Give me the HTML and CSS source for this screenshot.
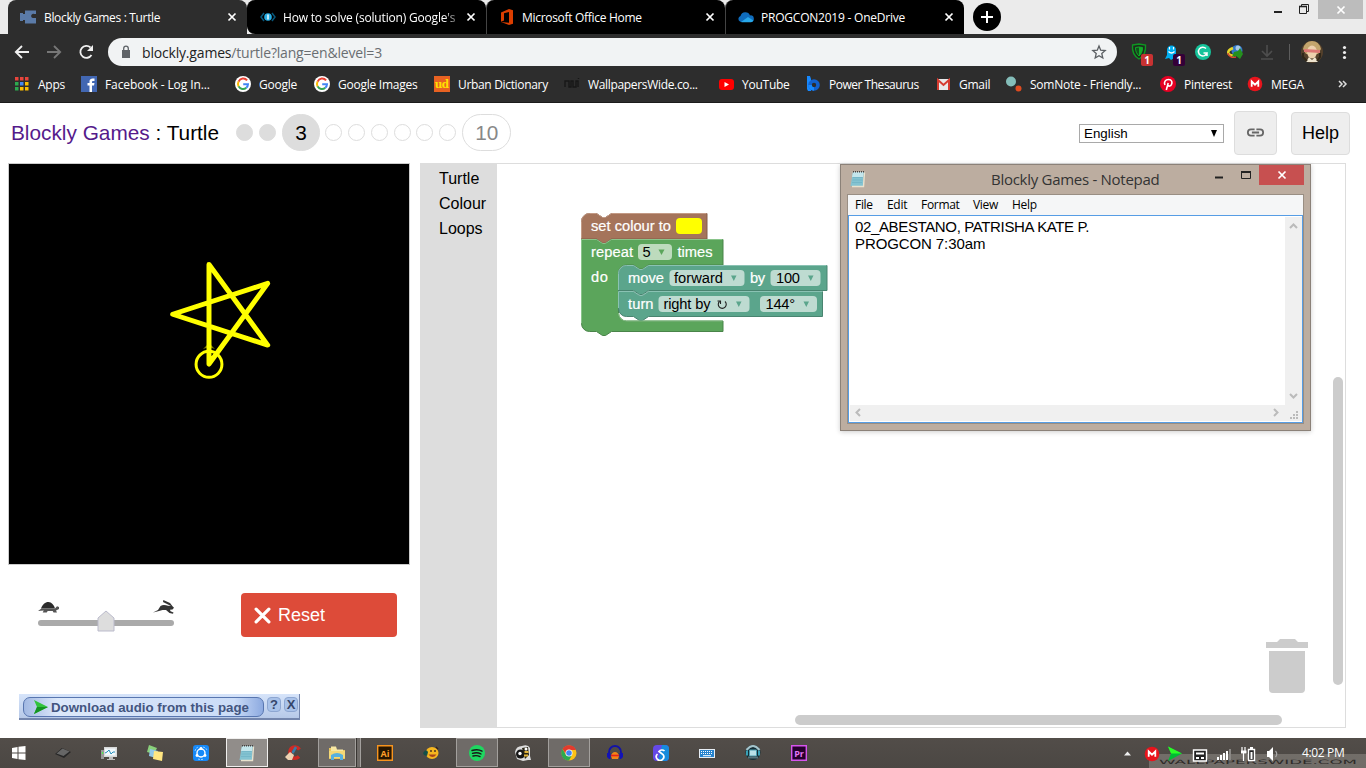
FILE: index.html
```html
<!DOCTYPE html>
<html lang="en">
<head>
<meta charset="utf-8">
<title>Blockly Games : Turtle</title>
<link rel="stylesheet" href="styles.css">
</head>
<body>
<svg class="defs" aria-hidden="true">
  <symbol id="g" viewBox="0 0 16 16"><circle cx="8" cy="8" r="8" fill="#fff"/><path d="M12.1 4.4A5 5 0 0 0 3.6 5.6" fill="none" stroke="#ea4335" stroke-width="2"/><path d="M3.6 5.6a5 5 0 0 0 0 4.8" fill="none" stroke="#fbbc05" stroke-width="2"/><path d="M3.6 10.4a5 5 0 0 0 7.7 1.4" fill="none" stroke="#34a853" stroke-width="2"/><path d="M11.3 11.8A5 5 0 0 0 13 8.2H8.2" fill="none" stroke="#4285f4" stroke-width="2"/></symbol>
  <symbol id="x" viewBox="0 0 10 10"><path d="M1.5 1.5l7 7m0-7l-7 7" fill="none" stroke="currentColor" stroke-width="1.7"/></symbol>
  <symbol id="mega" viewBox="0 0 16 16"><circle cx="8" cy="8" r="7.3" fill="#e8141c"/><path d="M4.7 10.8V5.5L8 8.7l3.3-3.2v5.3" fill="none" stroke="#fff" stroke-width="1.8"/></symbol>
  <symbol id="note" viewBox="0 0 16 18"><path d="M3 2h11l-1 14H.5z" fill="#84c3d1"/><path d="M3 2h10.500l-.5 5H2z" fill="#c4e6ec"/><path d="M14.500 2.500l-1 14H2" fill="none" stroke="#e9e2ce" stroke-width="1.400"/><path d="M3 7.500h9.500M2.500 10h10M2 12.500h10" stroke="#6fb2c4" stroke-width=".7"/><path d="M3 1.800h11" stroke="#444" stroke-width="1.500" stroke-dasharray="1 1"/></symbol>
</svg>

<header class="browser">
  <div class="tabs">
    <div class="tab active"><svg class="fav" viewBox="0 0 16 16"><path d="M5 1.500h11V5h-2c-3-1-4 4-1 4h3v5.500H5V11H3v1H0V4h3v1h2z" fill="#5b7ba8"/></svg><span class="t1">Blockly Games : Turtle</span><svg class="close"><use href="#x"/></svg></div>
    <div class="tab"><svg class="fav" viewBox="0 0 16 16"><path d="M4 4L1 8l3 4m8-8l3 4-3 4" fill="none" stroke="#07577b" stroke-width="1.5"/><circle cx="8" cy="8" r="3.800" fill="#27aee5"/><path d="M8 5.500v5" stroke="#fff" stroke-width="1.400"/></svg><span class="t2">How to solve (solution) Google's</span><svg class="close"><use href="#x"/></svg></div>
    <div class="tab"><svg class="fav" viewBox="0 0 16 16"><path d="M2 3.500L10 0l4 1.200v13.600L10 16l-8-3 8 .8V3L5 4.200v7.300l-3 1.300z" fill="#dc3e00"/></svg><span class="t3">Microsoft Office Home</span><svg class="close"><use href="#x"/></svg></div>
    <div class="tab"><svg class="fav" viewBox="0 0 16 16"><path d="M2 12.500A3 3 0 0 1 2.500 7 5 5 0 0 1 12 6.400 3.300 3.300 0 0 1 13 13H3z" fill="#0f6cbd"/><path d="M3 13l7-5 5.300 3.600A2.500 2.500 0 0 1 13 13.200H4z" fill="#28a8ea"/></svg><span class="t4">PROGCON2019 - OneDrive</span><svg class="close"><use href="#x"/></svg></div>
    <svg class="newtab" viewBox="0 0 28 28"><circle cx="14" cy="14" r="14"/><path d="M14 8v12M8 14h12" stroke="#fff" stroke-width="2"/></svg>
    <div class="winctl"><svg class="minmax" viewBox="0 0 60 19"><path d="M16 12h8" stroke="#222" stroke-width="2"/><path d="M41.500 6.500h7v7h-7zM43.500 6.500v-2h7v7h-2" fill="none" stroke="#222"/><path d="M41 6.500h8" stroke="#222" stroke-width="1.600"/></svg><div class="winclose"><svg viewBox="0 0 10 10"><use href="#x"/></svg></div></div>
  </div>
  <div class="toolbar">
    <svg class="nav" viewBox="0 0 95 28"><g fill="none" stroke="#f0f0f0" stroke-width="1.8"><path d="M22 14H9m6-6l-6.200 6 6.200 6"/><path d="M40 14h13m-6-6l6.200 6-6.200 6" stroke="#777"/><path d="M84.500 17a6 6 0 1 1-1-7.500"/></g><path d="M86 7v6h-6z" fill="#f0f0f0"/></svg>
    <div class="omni"><svg class="lock" viewBox="0 0 10 14"><path d="M1 5h8v8H1z" fill="#5f6368"/><path d="M2.700 5V3.500a2.300 2.300 0 0 1 4.600 0V5" fill="none" stroke="#5f6368" stroke-width="1.3"/></svg><span class="url">blockly.games<i>/turtle?lang=en&amp;level=3</i></span><svg class="star" viewBox="0 0 16 16"><path d="M8 2l1.700 4.200 4.500.4-3.400 3 1 4.400L8 11.700 4.200 14l1-4.400-3.400-3 4.500-.4z" fill="none" stroke="#5a5e62" stroke-width="1.300"/></svg></div>
    <svg class="exts" viewBox="1124 38 242 28">
      <path d="M1132.500 45l6.500-1 6.500 1c.5 6-1 11-6.500 14-5.500-3-7-8-6.500-14z" fill="#1d2b1e" stroke="#0e9722" stroke-width="1.400"/><path d="M1135.500 47.500l3.500-.5 3.500.5c0 4-1 6-3.500 8.500-2.500-2.500-3.500-4.500-3.500-8.500z" fill="#10511b" stroke="#12aa28"/><path d="M1139 47l3.500.5c0 4-1 6-3.500 8.500z" fill="#12aa28"/><rect x="1141" y="54" width="12" height="12" rx="2" fill="#c83232"/><text x="1147" y="64" class="badge">1</text>
      <path d="M1165 59l2-4v-5a4.500 4.500 0 0 1 9 0v6l1 4-3-2-3 2-2-2z" fill="#00aef0"/><path d="M1169.500 47v2.500m4-2.500v2.500m-5 2q3 3 6 0" fill="none" stroke="#fff" stroke-width="1.200"/><rect x="1173" y="54" width="12" height="12" rx="2" fill="#340038"/><text x="1179" y="64" class="badge">1</text>
      <circle cx="1203" cy="52" r="8" fill="#15c39a"/><path d="M1206 48.500a4.400 4.400 0 1 0 1 4.500h-3.500m3.500 0v3" fill="none" stroke="#fff" stroke-width="1.500"/>
      <circle cx="1237" cy="50.500" r="5.500" fill="#3479c9"/><circle cx="1238" cy="48" r="2.500" fill="#a9c9e6"/><path d="M1233 48c-7 3-6 7 1 8" fill="none" stroke="#e5d72b" stroke-width="2.500"/><path d="M1228 53c0 3 4 5 8 4" fill="none" stroke="#d74832" stroke-width="1.500"/><path d="M1234 52l4-1 2-3 3 6-3 5-4-3-4 1z" fill="#25901e"/>
      <path d="M1267 45v11m-5-5l5 5 5-5M1261 59h12" fill="none" stroke="#4e4e4e" stroke-width="1.600"/><path d="M1289.500 44v16" stroke="#5d5d5d"/>
      <circle cx="1312" cy="52" r="11" fill="#54402b"/><path d="M1303 49q2-8 9-8t9 8l-3 5h-12z" fill="#c3a56d"/><ellipse cx="1312" cy="52" rx="5" ry="6.500" fill="#edd0ad"/><path d="M1304 49l16 1v3l-16-1z" fill="#dd7774"/><path d="M1306 62l3-5 3 3 3-3 3 5z" fill="#eee4cf"/><path d="M1303 53v4l4 4m13-8v4l-3 4" fill="none" stroke="#302719" stroke-width="2"/>
      <circle cx="1344.500" cy="47.500" r="1.600" fill="#eee"/><circle cx="1344.500" cy="52.500" r="1.600" fill="#eee"/><circle cx="1344.500" cy="57.500" r="1.600" fill="#eee"/>
    </svg>
  </div>
  <nav class="bookmarks">
    <span class="bm apps"><svg viewBox="0 0 16 16"><path d="M0 1h3.500v3.500H0zM5 1h3.500v3.500H5zM10 1h3.500v3.500H10z" fill="#e8453c"/><path d="M0 6h3.500v3.500H0zM0 11h3.500v3.500H0z" fill="#2da94f"/><path d="M5 6h3.500v3.500H5z" fill="#4688f1"/><path d="M10 6h3.500v3.500H10zM5 11h3.500v3.500H5zM10 11h3.500v3.500H10z" fill="#fcbd00"/></svg>Apps</span>
    <span class="bm fb"><svg viewBox="0 0 16 16"><path d="M0 0h16v16H0z" fill="#4267b2"/><path d="M8.500 16V9.500h-2V7h2V5.300C8.500 3.300 10 2.500 11.500 2.500h2v2.400h-1.300c-.9 0-1.200.4-1.200 1.200V7h2.500L13 9.500h-2V16z" fill="#fff"/></svg>Facebook - Log In...</span>
    <span class="bm"><svg><use href="#g"/></svg>Google</span>
    <span class="bm"><svg><use href="#g"/></svg>Google Images</span>
    <span class="bm urban"><svg viewBox="0 0 16 16"><path d="M0 0h16v16H0z" fill="#e86222"/><text x="7.700" y="12" class="ud">ud</text></svg>Urban Dictionary</span>
    <span class="bm urban"><svg viewBox="0 0 16 16"><path d="M1 11V5h4v6h2V5h2v6h3V5h2v6M14.500 2v1" fill="none" stroke="#171717" stroke-width="1.400"/></svg>WallpapersWide.co...</span>
    <span class="bm"><svg viewBox="0 0 16 16"><rect x="1" y="3" width="15" height="11" rx="3" fill="#f00"/><path d="M6.500 6v5L11 8.500z" fill="#fff"/></svg>YouTube</span>
    <span class="bm power"><svg viewBox="0 0 16 16"><path d="M2 0h3l1 3v12H3l-1-2z" fill="#1689ff"/><circle cx="9" cy="9" r="4" fill="none" stroke="#1261ce" stroke-width="3.600"/><path d="M5 9a4 4 0 0 0 4 4" fill="none" stroke="#1689ff" stroke-width="3.600"/></svg>Power Thesaurus</span>
    <span class="bm gmail"><svg viewBox="0 0 16 16"><path d="M1 3h13v11H1z" fill="#e9e9e9"/><path d="M2 14V4l5.500 5L13 4v10" fill="none" stroke="#d63b30" stroke-width="2"/></svg>Gmail</span>
    <span class="bm"><svg viewBox="0 0 16 16"><circle cx="5" cy="5.500" r="5" fill="#84bdb9"/><circle cx="12.500" cy="12.500" r="3" fill="#df4b20"/></svg>SomNote - Friendly...</span>
    <span class="bm"><svg viewBox="0 0 16 16"><circle cx="8" cy="8" r="8" fill="#e60023"/><path d="M6.300 14L8.200 7M5 9C3.500 6 5.500 3.500 8.500 3.500c3.500 0 4 3 3 5-.8 1.800-3 2.200-3.700.7" fill="none" stroke="#fff" stroke-width="1.600"/></svg>Pinterest</span>
    <span class="bm"><svg><use href="#mega"/></svg>MEGA</span>
    <svg class="chev" viewBox="0 0 10 10"><path d="M1 2l3 3-3 3m4-6l3 3-3 3" fill="none" stroke="#ddd" stroke-width="1.500"/></svg>
  </nav>
</header>

<main class="page">
  <div class="gamehead">
    <h1><a>Blockly Games</a> : Turtle</h1>
    <div class="levels"><b class="dot done"></b><b class="dot done"></b><b class="lvl current">3</b><b class="dot"></b><b class="dot"></b><b class="dot"></b><b class="dot"></b><b class="dot"></b><b class="dot"></b><b class="lvl last">10</b></div>
    <div class="select">English<span></span></div>
    <div class="linkbtn"><svg viewBox="0 0 20 10"><path d="M9 1.500H5a3.500 3.500 0 0 0 0 7h4m2-7h4a3.500 3.500 0 0 1 0 7h-4M6 5h8" fill="none" stroke="#666" stroke-width="2"/></svg></div>
    <div class="helpbtn">Help</div>
  </div>
  <div class="game">
    <section class="left">
      <svg class="stage" viewBox="8 163 402 402"><g fill="none" stroke="#ff0"><path d="M209 364V264L268 345 172.500 314 268 283z" stroke-width="5" stroke-linejoin="round" stroke-linecap="round"/><circle cx="209" cy="364.300" r="13" stroke-width="3"/></g><path d="M203 349l6-6 6 6-6-2z" fill="#ff0" opacity=".5"/></svg>
      <div class="controls">
        <svg class="slider" viewBox="30 590 160 50"><path d="M41 623h130" stroke="#aaa" stroke-width="6" stroke-linecap="round"/><path d="M98 631v-13l8-7 8 7v13z" fill="#ddd" stroke="#bbc"/>
          <path d="M41 608.500c1.500-4 4-6.500 7.500-6.500 3 0 5.500 3 6.500 6.500z" fill="#2b2b2b"/><path d="M38 611l3.500-2.500H55l2-2.300 2 .800v2l-3 1.500 1 2h-3.500l-.8-1.500h-5l-1 1.500h-4l1-2z" fill="#555"/>
          <path d="M153 612.500l5-2.500 2.500-4c2-1.500 5-1.200 7.500-.2l3 .2-8-4 .3-2 6.700 3 2.500 3.200 1.500 1.500-1.500 1.800-2.500.3.500 1.500 3 1.200-.5 1.200-3.500-.8-3.500-2.800-3.500-.2-3.500 1.200z" fill="#333"/></svg>
        <div class="reset"><svg viewBox="0 0 16 16"><path d="M2 2l12 12m0-12L2 14" stroke="#fff" stroke-width="3" stroke-linecap="round"/></svg>Reset</div>
      </div>
      <div class="download"><div class="dlbtn"><svg viewBox="0 0 14 14"><path d="M0 0l14 7-14 7 3-7z" fill="#32c43c"/><path d="M0 14l3-7h11z" fill="#159423"/></svg><span>Download audio from this page</span></div><b>?</b><b>X</b></div>
    </section>
    <aside class="toolbox"><div>Turtle</div><div>Colour</div><div>Loops</div></aside>
    <svg class="workspace" viewBox="497 164 848 563">
      <g transform="translate(-.5 0)">
        <path class="shade brown" d="M582 221.500a8 8 0 0 1 8-8h7l6 4h3l6-4H707.500V239H612l-6 4h-3l-6-4H582z"/>
        <path class="shade green" d="M582 239.500H597l6 4h3l6-4H723.500V265H649l-6 4h-3l-6-4h-7a8 8 0 0 0-8 8V313a8 8 0 0 0 8 8H723.500V331.500H612l-6 4h-3l-6-4h-7a8 8 0 0 1-8-8z"/>
        <path class="shade teal" d="M619 273.500a8 8 0 0 1 8-8h7l6 4h3l6-4H827.500V290.500H649l-6 4h-3l-6-4H619z"/>
        <path class="shade teal" d="M619 291.500H634l6 4h3l6-4H823V316.500H649l-6 4h-3l-6-4h-7a8 8 0 0 1-8-8z"/>
        <g fill="none" stroke-width="1">
          <path d="M582 238.500v-17a8 8 0 0 1 8-8h7l6 4h3l6-4H707" stroke="#c39a85"/>
          <path d="M582 323v-83.500H597l6 4h3l6-4H723" stroke="#89c48a"/>
          <path d="M619 290v-16.500a8 8 0 0 1 8-8h7l6 4h3l6-4H827M619 308v-16.500H634l6 4h3l6-4H823" stroke="#8ac2b3"/>
          <path d="M619 313a8 8 0 0 0 8 8H723" stroke="#89c48a"/>
        </g>
      </g>
      <rect x="676" y="218" width="26" height="16" rx="4" fill="#ff0"/>
      <rect x="638" y="244" width="34" height="16" rx="4" fill="#bddbbd"/>
      <rect x="669.500" y="270" width="75" height="16" rx="4" fill="#bedbd1"/><rect x="770.500" y="270" width="50" height="16" rx="4" fill="#bedbd1"/>
      <rect x="658.500" y="296" width="91" height="16" rx="4" fill="#bedbd1"/><rect x="760" y="296" width="57" height="16" rx="4" fill="#bedbd1"/>
      <g class="bt"><text x="591" y="231" textLength="80">set colour to</text><text x="591" y="257" textLength="42">repeat</text><text x="677.500" y="257" textLength="35">times</text><text x="591" y="282" textLength="17">do</text><text x="628" y="283" textLength="36">move</text><text x="750" y="283" textLength="15">by</text><text x="628" y="309" textLength="25.500">turn</text></g>
      <g class="bt dark"><text x="642.500" y="257">5</text><text x="674" y="283" textLength="49">forward</text><text x="776" y="283" textLength="24">100</text><text x="663.500" y="309" textLength="47">right by</text><text x="765.500" y="309" textLength="29.500">144°</text></g>
      <path d="M719.500 301.500a4 4 0 1 0 5.500 0M717.500 301h3v3" fill="none" stroke="#222" stroke-width="1.100"/>
      <path d="M658.500 249.500h6l-3 5.500z" fill="#5ba55b"/><path d="M731 275.500h5.500l-2.700 5.500zM808 275.500h5.500l-2.700 5.500zM736 301.500h5.500l-2.700 5.500zM803.500 301.500h5.500l-2.700 5.500z" fill="#5ba58c"/>
      <path d="M1266 642h11l3-3h15l3 3h10v6h-42zM1269 651h36v38a4 4 0 0 1-4 4h-28a4 4 0 0 1-4-4z" fill="#ccc"/>
      <rect x="1333" y="377" width="10" height="308" rx="5" fill="#ccc"/><rect x="795" y="715" width="487" height="10" rx="5" fill="#ccc"/>
    </svg>
  </div>
</main>

<div class="notepad">
  <div class="nptitle"><svg class="npicon"><use href="#note"/></svg><span>Blockly Games - Notepad</span><svg class="npctl" viewBox="0 0 45 20"><path d="M1 12.500h8" stroke="#222" stroke-width="2"/><path d="M27.500 6.500h9v7h-9z" fill="none" stroke="#222"/><path d="M27 7h10" stroke="#222" stroke-width="2"/></svg><div class="npclose"><svg><use href="#x"/></svg></div></div>
  <div class="npbody">
    <div class="npmenu"><span>File</span><span>Edit</span><span>Format</span><span>View</span><span>Help</span></div>
    <div class="npedit">
      <div class="nptext"><p class="l1">02_ABESTANO, PATRISHA KATE P.</p><p class="l2">PROGCON 7:30am</p></div>
      <svg class="vs" viewBox="0 0 17 188"><path d="M5 11l3.500-3.500L12 11M5 177l3.500 3.500L12 177" fill="none" stroke="#bbb" stroke-width="2"/></svg>
      <svg class="hs" viewBox="0 0 452 16"><path d="M10 4L6.500 7.500 10 11M424 4l3.500 3.500L424 11" fill="none" stroke="#bbb" stroke-width="2"/><path d="M446 6h2v2h-2zM443 9h2v2h-2zM446 9h2v2h-2zM440 12h2v2h-2zM443 12h2v2h-2zM446 12h2v2h-2z" fill="#bbb"/></svg>
    </div>
  </div>
</div>

<footer class="taskbar">
  <div class="task start"><svg viewBox="0 0 16 16"><path d="M1 3l5.500-1v5.500H1zM7.500 1.800L14.500 1v6.500h-7zM1 8.500h5.500V14L1 13zM7.500 8.500h7V15l-7-.8z" fill="#fff"/></svg></div>
  <div class="task"><svg viewBox="0 0 16 16"><path d="M0 9l7-6 9 4-7 6z" fill="#262626"/><path d="M1.500 8.500L7.500 3.500l7 3-6 4.500z" fill="#666"/></svg></div>
  <div class="task"><svg viewBox="0 0 16 16"><path d="M3 2h13v10H3z" fill="#d7d9d9"/><path d="M4 3.500h10.500v7H4z" fill="#f2f9fc"/><path d="M4 8l2-1 2-2 2 4 2-2h2" fill="none" stroke="#268ebc"/><path d="M8 12h4v2h2v1H6v-1h2z" fill="#bbb"/><path d="M0 5h3v9H0z" fill="#999"/><path d="M1 7h1v2H1z" fill="#4f4"/></svg></div>
  <div class="task"><svg viewBox="0 0 16 16"><path d="M2 0l8 3-3 6-7-2z" fill="#8ad17b"/><path d="M3 4l8 2-2 7-7-2z" fill="#91c8e8"/><path d="M7 6l9 1-1 9-9-2z" fill="#ffe681"/></svg></div>
  <div class="task"><svg viewBox="0 0 16 16"><rect width="16" height="16" rx="3" fill="#1689f8"/><circle cx="8" cy="8" r="4" fill="none" stroke="#fff" stroke-width="1.400"/><circle cx="8" cy="3.500" r="1.400" fill="#fff"/><circle cx="4" cy="10.500" r="1.400" fill="#fff"/><circle cx="12" cy="10.500" r="1.400" fill="#fff"/><path d="M2 6q1-4 4-4m4 0q4 1 4 4M5 14q3 1 6 0" fill="none" stroke="#9bd1ff" stroke-dasharray="2 1"/></svg></div>
  <div class="task open focus"><svg viewBox="0 0 16 18"><use href="#note"/></svg></div>
  <div class="task"><svg viewBox="0 0 16 16"><path d="M14.500 4.500C11 0 5 2 5 7.500s5 7.500 9 4" fill="none" stroke="#ce2a24" stroke-width="3.600"/><path d="M11 2L7.500 8" stroke="#387da9" stroke-width="2.500"/><path d="M5 7l4 3-2 5H3l-3-3z" fill="#edd2b2"/></svg></div>
  <div class="task open stack"><svg viewBox="0 0 16 16"><path d="M0 3h6l1 2h9v9H0z" fill="#e9c65d"/><path d="M2 1.500h5l1 3h6V7H2z" fill="#f7e7a2"/><path d="M0 6h16v7H0z" fill="#f3d877"/><path d="M2 15v-5q6-4 12 0v5h-3v-3H5v3z" fill="#56b0df"/></svg></div>
  <div class="task"><svg viewBox="0 0 16 16"><path d="M.7.700h14.600v14.600H.7z" fill="#271600" stroke="#f7941e" stroke-width="1.400"/><text x="8" y="11.500" class="adobe ai">Ai</text></svg></div>
  <div class="task"><svg viewBox="0 0 16 16"><ellipse cx="9" cy="8" rx="6.500" ry="6" fill="#f5b61f"/><path d="M0 8q3-5 5-1l-1 4-3-1z" fill="#134f49"/><path d="M5.500 9.500q4 5 8 0" fill="#a7431c"/><path d="M8 5v2m4-2v2M13 2l2 2" stroke="#322" stroke-width="1.300"/></svg></div>
  <div class="task open"><svg viewBox="0 0 16 16"><circle cx="8" cy="8" r="8" fill="#1ed760"/><path d="M3 5.500q6-1.700 10 .7M3.500 8.300q5-1.400 8.500.7M4 11q4-1 7 .6" fill="none" stroke="#171717" stroke-width="1.400" stroke-linecap="round"/></svg></div>
  <div class="task"><svg viewBox="0 0 16 16"><path d="M0 7Q1 1 7 1q6-2 8 2v8l1 4h-3l-5 1-6-2z" fill="#ddd"/><circle cx="5.500" cy="9" r="4.500" fill="#151515"/><circle cx="5" cy="8.500" r="1.700" fill="#fff"/><path d="M7 3l6-1 1 8-4 4z" fill="#292516"/><path d="M9.500 7h4M9 10.500h4" stroke="#e0b33a" stroke-width="1.800"/><circle cx="11" cy="4" r="1.500" fill="#fff"/></svg></div>
  <div class="task open"><svg viewBox="0 0 16 16"><circle cx="8" cy="8" r="7.500" fill="#fbc116"/><path d="M1.500 4A7.500 7.500 0 0 1 15 5H8L5 9z" fill="#e33b2e"/><path d="M1.500 4A7.500 7.500 0 0 0 8 15.500L11 10H5z" fill="#2da94f"/><circle cx="8" cy="8" r="3.500" fill="#fff"/><circle cx="8" cy="8" r="2.800" fill="#4285f4"/></svg></div>
  <div class="task"><svg viewBox="0 0 16 16"><path d="M2 10V7a6 6 0 0 1 12 0v3" fill="none" stroke="#1212a8" stroke-width="1.800"/><path d="M0 8h3.500v6H2l-2-2zM12.500 8H16v4l-2 2h-1.500z" fill="#1212b8"/><path d="M4 11q1-4 4-4t4 4l-1 3H5z" fill="#f28618"/><path d="M4 10.500h8" stroke="#e5231c" stroke-width="1.600"/></svg></div>
  <div class="task"><svg viewBox="0 0 16 16"><rect width="16" height="16" rx="4" fill="#6549e8"/><path d="M9 0h3a4 4 0 0 1 4 4v8a4 4 0 0 1-4 4H5z" fill="#168bdc"/><path d="M4.500 9A3.700 3.700 0 1 0 10 9.500L6 6.500A3.700 3.700 0 0 1 11.500 6" fill="none" stroke="#fff" stroke-width="1.700"/></svg></div>
  <div class="task"><svg viewBox="0 0 16 16"><path d="M0 4h16v9H0z" fill="#e7eef5"/><path d="M1 5h14v7H1z" fill="#2684cf"/><path d="M2 6.500h12M2 8.500h12" stroke="#fff" stroke-dasharray="1 1"/><path d="M4 10.700h8" stroke="#fff"/></svg></div>
  <div class="task"><svg viewBox="0 0 16 16"><circle cx="8" cy="7.500" r="7.500" fill="#142e36"/><path d="M1.500 5q6.500-8 13 0" fill="none" stroke="#a5c4cc" stroke-width="2"/><path d="M4.500 5h7v6h-7z" fill="#b9e1e8" stroke="#4b9caf"/><path d="M2 5.500v5m12-5v5" stroke="#39a1b7" stroke-width="2"/><path d="M3 12.500h10" stroke="#58757c" stroke-width="2"/></svg></div>
  <div class="task"><svg viewBox="0 0 16 16"><path d="M.7.700h14.600v14.600H.7z" fill="#25002d" stroke="#d655ee" stroke-width="1.400"/><text x="8" y="11.500" class="adobe pr">Pr</text></svg></div>
  <svg class="tray" viewBox="1116 738 174 30"><path d="M1124 755.500l3.500-4 3.500 4z" fill="#eee"/><use href="#mega" x="1144" y="746" width="16" height="16"/><path d="M1168 746.500l14 7-14 7.500 3-7.500z" fill="#0b3"/><path d="M1168 746.500l14 7h-11z" fill="#2dfd27"/><path d="M1193.500 750h13v11h-13z" fill="#222" stroke="#fff" stroke-width="1.400"/><path d="M1196 752.500h8v2h-8zM1196 757h3v2h-3zM1201 757h3v2h-3z" fill="#fff"/><path d="M1217 757h2v3h-2zM1220 755h2v5h-2zM1223 753h2v7h-2zM1226 751h2v9h-2z" fill="#fff"/><path d="M1229 749h2v11h-2z" fill="#8b8885"/><path d="M1248.500 749.500h6v11h-6z" fill="#222" stroke="#fff" stroke-width="1.400"/><path d="M1250 747h3v2h-3zM1250.500 752h2v7h-2z" fill="#fff"/><path d="M1242 747v4m3-4v4m-1.500 2v8" fill="none" stroke="#fff" stroke-width="1.200"/><path d="M1241 750.500h5.500v3h-5.500z" fill="#fff"/><path d="M1267 751h2l4-4v14l-4-4h-2z" fill="#fff"/><path d="M1275.500 751q2.500 3 0 6" fill="none" stroke="#aaa" stroke-width="1.200"/></svg>
  <span class="clock">4:02 PM</span>
  <svg class="mark" viewBox="1149 754 217 14"><text x="1159" y="763.500" textLength="198" lengthAdjust="spacingAndGlyphs">WALLPAPERSWIDE.COM</text></svg>
</footer>
</body>
</html>
```
FILE: styles.css
```css
* { box-sizing: border-box; }
body { margin: 0; width: 1366px; height: 768px; overflow: hidden; background: #fff; font-family: "Liberation Sans", Arial, sans-serif; color: #000; }
svg { display: block; flex: none; }
.defs { width: 0; height: 0; position: absolute; }

/* Browser frame */
.browser { height: 103px; background: #2d2d2d; border-bottom: 1px solid #1b1b1b; font-family: "Open Sans", "Noto Sans", sans-serif; font-size: 12px; color: #fff; }
.tabs { height: 34px; background: #ebebeb; display: flex; padding-left: 8px; }
.tab { width: 239px; height: 34px; background: #000; border-radius: 8px 8px 0 0; display: flex; align-items: center; padding: 0 10px 0 12px; border-left: 1px solid #444; }
.tab.active { background: #2d2d2d; border: 0; padding-left: 12px; }
.tab.active .fav { margin-right: 8px; }
.tab.active + .tab { border-color: #000; border-bottom-left-radius: 8px; }
.fav { width: 16px; height: 16px; margin-right: 7px; }
.tab span { flex: 1; white-space: nowrap; overflow: hidden; }
.close { width: 10px; height: 10px; color: #fff; }
.t1 { letter-spacing: -.33px; } .t2 { letter-spacing: -.18px; } .t3 { letter-spacing: -.3px; } .t4 { letter-spacing: -.22px; }
.t2 { margin-right: 10px; -webkit-mask-image: linear-gradient(90deg, #000 93%, rgba(0,0,0,.4)); }
.newtab { width: 28px; height: 28px; margin: 3px 0 0 9px; }
.winctl { margin-left: auto; display: flex; }
.minmax { width: 60px; height: 19px; }
.winclose { width: 45px; height: 19px; margin-right: 3px; background: #bcbcbc; color: #fff; display: grid; place-items: center; }
.winclose svg { width: 10px; height: 10px; }
.toolbar { height: 36px; display: flex; padding-top: 4px; }
.nav { width: 95px; height: 28px; margin: 0 6px 0 7px; }
.omni { width: 1009px; height: 28px; background: #f1f3f4; border-radius: 14px; display: flex; align-items: center; padding: 0 10px 0 13px; }
.lock { width: 10px; height: 14px; margin-right: 11px; }
.url { flex: 1; color: #222; font-size: 14px; letter-spacing: -.18px; }
.url i { font-style: normal; color: #6a6e72; }
.star { width: 16px; height: 16px; }
.exts { width: 242px; height: 28px; margin-left: 7px; }
.badge { font: bold 10px "Open Sans", sans-serif; fill: #fff; text-anchor: middle; }
.bookmarks { height: 28px; padding-left: 15px; display: grid; grid-template-columns: 66px 154px 79px 120px 130px 154px 87px 131px 70px 154px 87px 91px 28px; align-items: center; }
.bm { display: flex; align-items: center; white-space: nowrap; letter-spacing: -.25px; }
.bm.fb { letter-spacing: -.1px; }
.bm.urban { letter-spacing: -.33px; }
.bm.power { letter-spacing: -.48px; }
.bm svg { width: 16px; height: 16px; margin-right: 8px; }
.bm.apps svg, .bm.gmail svg { margin-right: 7px; }
.ud { font: bold 10.500px "DejaVu Serif", serif; letter-spacing: -.5px; fill: #ffe000; text-anchor: middle; }
.chev { width: 10px; height: 10px; }

/* Game header */
.gamehead { height: 60px; display: flex; padding-left: 11px; }
h1 { margin: 0; width: 225px; font-size: 20.800px; font-weight: normal; line-height: 60px; white-space: nowrap; }
h1 a { color: #551a8b; }
.levels { display: flex; align-items: center; gap: 5.750px; width: 280px; margin-top: -1px; height: 60px; }
.dot { width: 17px; height: 17px; border: 1px solid #ddd; border-radius: 50%; flex: none; }
.dot.done { background: #ddd; }
.lvl { flex: none; height: 37px; border-radius: 19px; border: 1px solid #ddd; font-size: 20.800px; font-weight: normal; display: grid; place-items: center; padding: 1px 0 0 1px; }
.current { width: 38px; background: #ddd; }
.last { width: 49px; color: #888; }
.select { width: 145px; height: 19px; margin: 21px 0 0 563px; border: 1px solid #a9a9a9; font-size: 13.330px; line-height: 18px; padding: 0 6px 0 4px; display: flex; justify-content: space-between; }
.select span { width: 6px; height: 7px; margin-top: 5px; background: #000; clip-path: polygon(0 0, 100% 0, 50% 100%); }
.linkbtn, .helpbtn { border: 1px solid #ddd; border-radius: 4px; background: #eee; display: grid; place-items: center; font-size: 18px; }
.linkbtn { width: 43px; height: 44px; margin: 8px 0 0 10px; padding: 0 1px 2px 0; }
.linkbtn svg { width: 19px; height: 9px; }
.helpbtn { width: 59px; height: 43px; margin: 9px 0 0 14px; }

/* Game area */
.game { display: flex; height: 565px; padding-left: 8px; }
.left { width: 412px; }
.stage { width: 402px; height: 402px; border: 1px solid #ccc; background: #000; }
.controls { display: flex; margin-top: 25px; padding-left: 22px; }
.slider { width: 160px; height: 50px; }
.reset { width: 156px; height: 44px; margin: 3px 0 0 51px; border-radius: 4px; background: #dd4b39; color: #fff; font-size: 18px; display: flex; align-items: center; padding-left: 13px; }
.reset svg { width: 17px; height: 17px; margin-right: 7px; }
.download { width: 281px; height: 26px; margin: 54px 0 0 11px; background: linear-gradient(#d6e4fa, #b7c9e8); border-right: 1px solid #7486ad; border-bottom: 2px solid #7486ad; display: flex; gap: 3px; padding: 3px 0 0 4px; }
.dlbtn { width: 241px; height: 20px; border: 1px solid #5876b0; border-radius: 7px; background: linear-gradient(90deg, #a2b9e3, #dce8fa 14%, #cbdcf7 88%, #8daae0); display: flex; align-items: center; padding-left: 10px; color: #43557f; font: bold 13.300px "Liberation Sans", sans-serif; white-space: nowrap; }
.dlbtn svg { width: 14px; height: 14px; margin-right: 3px; }
.download b { width: 14px; height: 15px; border-radius: 4px; background: #a9c2e9; border: 1px solid #8da6d1; color: #35466b; font-size: 13px; line-height: 14px; text-align: center; }
.toolbox { width: 77px; height: 565px; background: #ddd; padding: 3px 0 0 19px; font-size: 16px; line-height: 25px; }
.workspace { width: 849px; height: 565px; border: 1px solid #ddd; border-left: 0; }
.shade { stroke-width: 1; }
.brown { fill: #a5745b; stroke: #845d49; }
.green { fill: #5ba55b; stroke: #498449; }
.teal { fill: #5ba58c; stroke: #498470; }
.bt { font: 14.670px "Liberation Sans", sans-serif; fill: #fff; stroke: #fff; stroke-width: .2px; }
.dark { fill: #000; stroke: none; }

/* Floating Notepad window */
.notepad { position: absolute; left: 840px; top: 164px; width: 471px; height: 267px; background: #bcada0; border: 1px solid #8b8178; padding: 0 6px 7px; box-shadow: 0 1px 5px rgba(0,0,0,.2); font-family: "Open Sans", sans-serif; }
.nptitle { height: 29px; display: flex; font-size: 15px; color: #333; }
.npicon { width: 16px; height: 18px; margin: 5px 0 0 3px; }
.nptitle span { width: 174px; margin: 3px 0 0 125px; letter-spacing: -.28px; line-height: 22px; white-space: nowrap; }
.npctl { width: 45px; height: 20px; margin-left: 49px; }
.npclose { width: 45px; height: 20px; background: #c75050; color: #fff; display: grid; place-items: center; }
.npclose svg { width: 10px; height: 10px; }
.npbody { width: 457px; height: 230px; border: 1px solid #998e83; background: #f5f6f7; display: flex; flex-direction: column; }
.npmenu { height: 20px; display: grid; grid-template-columns: 32px 34px 52px 39px 40px; padding-left: 7px; font-size: 12px; line-height: 20px; letter-spacing: -.3px; }
.npedit { width: 455px; height: 208px; border: 1px solid #569de5; background: #fff; display: grid; grid-template: 188px 16px / 435px 17px; padding: 1px 0 0 1px; }
.nptext { padding: 1px 0 0 5px; font: 15px/17px "Liberation Sans", sans-serif; }
.nptext p { margin: 0; white-space: nowrap; }
.l1 { letter-spacing: -.36px; }
.l2 { letter-spacing: -.1px; }
.vs { width: 17px; height: 188px; background: #f0f0f0; }
.hs { width: 452px; height: 16px; background: #f0f0f0; grid-column: 1 / 3; }

/* Taskbar */
.taskbar { height: 30px; margin-top: 10px; background: linear-gradient(#524d49, #4b4743); display: flex; position: relative; font-family: "Open Sans", sans-serif; }
.task { width: 42px; height: 29px; margin: 0 2px; display: grid; place-items: center; flex: none; }
.task svg { width: 16px; height: 16px; }
.start { width: 38px; margin: 0 2px 0 0; }
.open { background: #6f6b68; border: 1px solid #a3a09d; }
.focus { background: #918d8a; border-color: #f0efee; }
.focus svg { height: 18px; }
.stack { width: 38px; margin-right: 6px; box-shadow: 1px 0 #393633, 4px 0 #6f6b68, 5px 0 #a3a09d; }
.adobe { font: bold 9px "Open Sans", sans-serif; text-anchor: middle; }
.ai { fill: #ffa12b; } .pr { fill: #e477f5; }
.tray { width: 174px; height: 30px; margin-left: 294px; position: relative; z-index: 1; }
.clock { font-size: 12px; color: #fff; letter-spacing: -.35px; line-height: 16px; height: 16px; margin: 7px 0 0 12px; position: relative; z-index: 1; white-space: nowrap; }
.mark { position: absolute; right: 0; bottom: 0; width: 217px; height: 14px; background: rgba(150,145,140,.5); }
.mark text { font: 6px "DejaVu Sans", sans-serif; fill: #2e2b29; }
```
